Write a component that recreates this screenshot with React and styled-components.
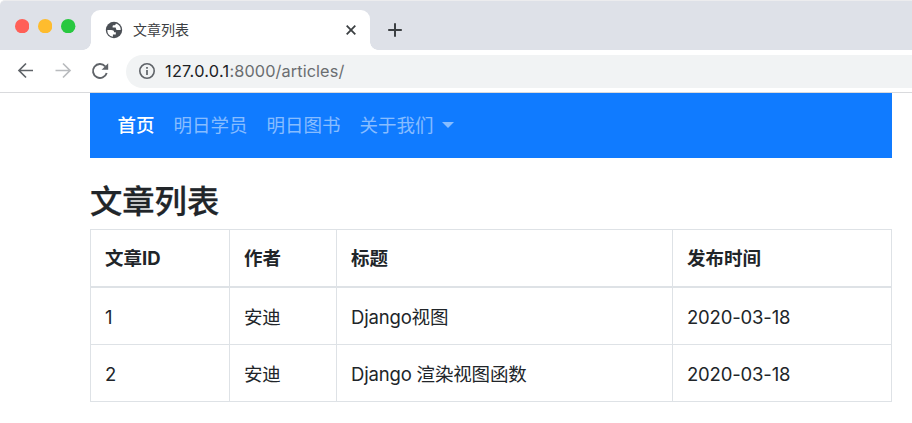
import React from 'react';
import styled, { createGlobalStyle } from 'styled-components';

const GlobalStyle = createGlobalStyle`
  * { box-sizing: border-box; }
  body {
    margin: 0;
    background: #fff;
    color: #212529;
    font-family: Inter, "Noto Sans CJK SC", sans-serif;
    overflow: hidden;
  }
`;

const Window = styled.div`
  height: 423px;
  overflow: hidden;
  background: #fff;
`;

const TabStrip = styled.header`
  display: flex;
  align-items: flex-end;
  height: 50px;
  background: #dee1e8;
  border-top: 1px solid #ececee;
  border-top-left-radius: 5px;
`;

const WindowButtons = styled.div`
  display: flex;
  gap: 9px;
  align-self: flex-start;
  width: 90.5px;
  padding: 17.5px 0 0 14.7px;
`;

const Light = styled.svg`
  display: block;
  width: 14.4px;
  height: 14.4px;
  fill: ${(p) => p.$color};
`;

const Tab = styled.div`
  position: relative;
  display: flex;
  align-items: center;
  width: 279.5px;
  height: 40px;
  padding: 0 13px 0 14.5px;
  background: #fff;
  border-radius: 9px 9px 0 0;

  &::before,
  &::after {
    content: "";
    position: absolute;
    bottom: 0;
    width: 8px;
    height: 8px;
  }
  &::before {
    left: -8px;
    background: radial-gradient(circle at 0 0, transparent 7.5px, #fff 8px);
  }
  &::after {
    right: -8px;
    background: radial-gradient(circle at 100% 0, transparent 7.5px, #fff 8px);
  }
`;

const TabTitle = styled.span`
  flex: 1;
  margin: -1px 0 0 10px;
  font-size: 14px;
  line-height: 20px;
  color: #3c4043;
`;

const NewTab = styled.div`
  display: flex;
  align-items: center;
  height: 40px;
  margin-left: 18px;
`;

const Toolbar = styled.div`
  display: flex;
  align-items: center;
  height: 43px;
  padding-left: 17px;
  border-bottom: 1px solid #d9dadd;
`;

const NavIcons = styled.div`
  display: flex;
  gap: 19px;
  width: 109px;
`;

const AddressBar = styled.div`
  display: flex;
  align-items: center;
  flex: 1;
  height: 33px;
  padding-left: 12px;
  border-radius: 17px 0 0 17px;
  background: #f1f3f4;
`;

const Url = styled.span`
  margin-left: 9px;
  font-size: 16.3px;
  line-height: 24px;
  letter-spacing: 0.1px;
  color: #6a6d70;
`;

const Host = styled.span`
  color: #202124;
  letter-spacing: 0.28px;
`;

const Page = styled.main`
  width: 802px;
  margin-left: 90px;
`;

const Navbar = styled.nav`
  display: flex;
  align-items: center;
  gap: 19px;
  height: 65px;
  padding: 0 0 1px 27.4px;
  background: #107bff;
`;

const NavLink = styled.a`
  display: flex;
  align-items: center;
  font-size: 18.5px;
  font-weight: ${(p) => (p.$active ? 500 : 400)};
  line-height: 28px;
  color: ${(p) => (p.$active ? '#fff' : 'rgba(255, 255, 255, 0.5)')};
`;

const Caret = styled.span`
  margin: 0 0 1px 9px;
  border: 6px solid transparent;
  border-top-color: currentColor;
  border-bottom: 0;
`;

const Title = styled.h1`
  margin: 24px 0 8px;
  font-size: 32.3px;
  line-height: 39px;
  font-weight: 500;
  -webkit-text-stroke: 0.3px currentColor;
`;

const Table = styled.div`
  border: solid #dee2e6;
  border-width: 1px 1px 0 0;
`;

const Row = styled.div`
  display: grid;
  grid-template-columns: 139px 107px 336px 1fr;
  height: ${(p) => (p.$head ? 58 : 57)}px;
  border-bottom: ${(p) => (p.$head ? 2 : 1)}px solid #dee2e6;
`;

const Cell = styled.div`
  display: flex;
  align-items: center;
  padding: ${(p) => (p.$head ? '0' : '2px')} 0 0 14px;
  border-left: 1px solid #dee2e6;
  font-size: 18.5px;
  line-height: 28px;
  letter-spacing: ${(p) => (p.$head ? '0' : '-0.17px')};
  white-space: pre;
  font-weight: ${(p) => (p.$head ? 700 : 400)};
`;

const lights = ['#ff5f57', '#febc2e', '#28c840'];
const links = ['首页', '明日学员', '明日图书', '关于我们'];
const headings = ['文章ID', '作者', '标题', '发布时间'];
const articles = [
  ['1', '安迪', 'Django视图', '2020-03-18'],
  ['2', '安迪', 'Django 渲染视图函数', '2020-03-18'],
];

const GlobeIcon = () => (
  <svg width="18" height="18" viewBox="0 0 18 18">
    <circle cx="9" cy="9" r="8.2" fill="#4b4f55" />
    <path
      d="M2.3 8.9h3.8c2 0 3 .9 3 2.3h1.7v2.2H7.9v2.3A6.9 6.9 0 0 1 2.3 8.9Z"
      fill="#fff"
    />
    <path
      d="M10.9 2.4c-.1 1.2-.7 1.8-2 1.8-.9 0-1.3.4-1.3 1.2v1.2h2.3c.8 0 1.1.5 1.1 1.1 0 .9.6 1.4 1.6 1.4h3.1A6.8 6.8 0 0 0 10.9 2.4Z"
      fill="#fff"
    />
  </svg>
);

const CloseIcon = () => (
  <svg width="12" height="12" viewBox="0 0 12 12">
    <path d="M1.7 1.7l8.6 8.6M10.3 1.7l-8.6 8.6" stroke="#3c4043" strokeWidth="1.8" />
  </svg>
);

const PlusIcon = () => (
  <svg width="14" height="14" viewBox="0 0 14 14">
    <path d="M7 .2v13.6M.2 7h13.6" stroke="#3c4043" strokeWidth="2" />
  </svg>
);

const Arrow = ({ color, forward }) => (
  <svg width="18" height="18" viewBox="0 0 18 18">
    <path
      d={forward ? 'M1.5 8.5h14M9 1.5l7 7-7 7' : 'M16 8.5H2M9 1.5l-7 7 7 7'}
      fill="none"
      stroke={color}
      strokeWidth="1.7"
    />
  </svg>
);

const ReloadIcon = () => (
  <svg width="18" height="18" viewBox="0 0 18 18">
    <path d="M15.7 11A7 7 0 1 1 14.2 4.3" fill="none" stroke="#5f6368" strokeWidth="1.9" />
    <path d="M17.2 1.2v6.6h-6.6z" fill="#5f6368" />
  </svg>
);

const InfoIcon = () => (
  <svg width="18" height="18" viewBox="0 0 18 18">
    <circle cx="9" cy="9" r="7.2" fill="none" stroke="#5f6368" strokeWidth="1.6" />
    <path d="M9 8v5M9 4.9v1.8" stroke="#5f6368" strokeWidth="1.7" />
  </svg>
);

export default function App() {
  return (
    <Window>
      <GlobalStyle />
      <TabStrip>
        <WindowButtons>
          {lights.map((color) => (
            <Light key={color} $color={color} viewBox="0 0 14 14">
              <circle cx="7" cy="7" r="7" />
            </Light>
          ))}
        </WindowButtons>
        <Tab>
          <GlobeIcon />
          <TabTitle>文章列表</TabTitle>
          <CloseIcon />
        </Tab>
        <NewTab>
          <PlusIcon />
        </NewTab>
      </TabStrip>
      <Toolbar>
        <NavIcons>
          <Arrow color="#5f6368" />
          <Arrow color="#b9bbbe" forward />
          <ReloadIcon />
        </NavIcons>
        <AddressBar>
          <InfoIcon />
          <Url>
            <Host>127.0.0.1</Host>:8000/articles/
          </Url>
        </AddressBar>
      </Toolbar>
      <Page>
        <Navbar>
          {links.map((label, i) => (
            <NavLink key={label} $active={i === 0}>
              {label}
              {i === links.length - 1 && <Caret />}
            </NavLink>
          ))}
        </Navbar>
        <Title>文章列表</Title>
        <Table>
          <Row $head>
            {headings.map((text) => (
              <Cell key={text} $head>{text}</Cell>
            ))}
          </Row>
          {articles.map((row) => (
            <Row key={row[0]}>
              {row.map((text, i) => (
                <Cell key={i}>{text}</Cell>
              ))}
            </Row>
          ))}
        </Table>
      </Page>
    </Window>
  );
}
